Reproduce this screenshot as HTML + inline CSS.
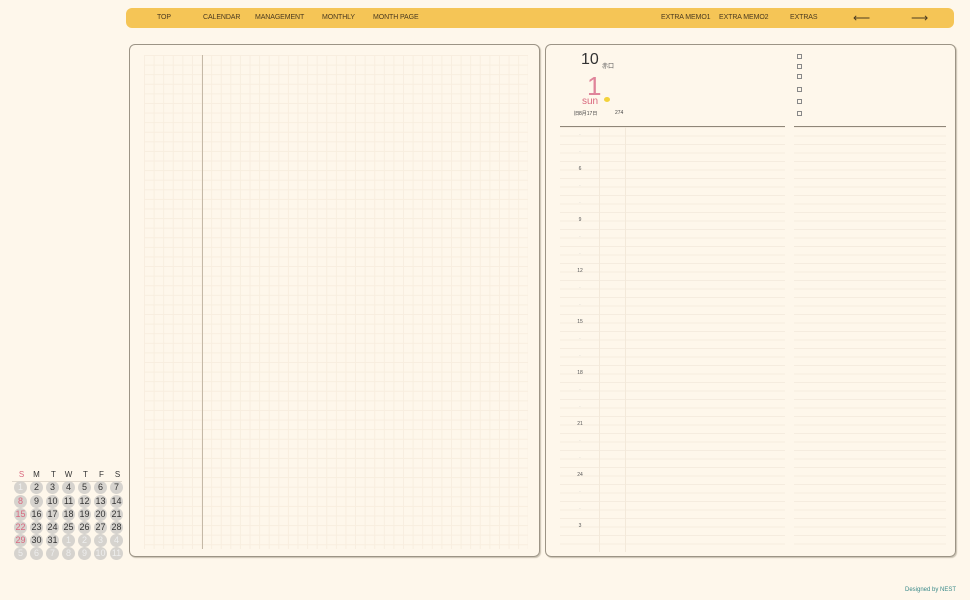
<!DOCTYPE html>
<html><head><meta charset="utf-8"><style>
*{margin:0;padding:0;box-sizing:border-box}
body{width:970px;height:600px;background:#fef7eb;font-family:"Liberation Sans","Noto Sans CJK JP",sans-serif;position:relative;overflow:hidden;color:#333}
.nav{position:absolute;left:126px;top:8px;width:828px;height:20px;background:#f5c556;border-radius:6px}
.nav span{position:absolute;top:6px;font-size:7px;color:#4a3a20;white-space:nowrap;letter-spacing:-0.1px}
.panel{position:absolute;top:44px;height:513px;border:1px solid #9c9486;border-radius:6px;box-shadow:1px 1px 1px #c8c0b0}
.grid{position:absolute;left:144px;top:55px;width:384px;height:494px;
background-image:linear-gradient(#f8eedf 1px,transparent 1px),linear-gradient(90deg,#f8eedf 1px,transparent 1px);background-size:9.6px 9.6px}
.t{position:absolute;white-space:nowrap}
.cb{position:absolute;left:797px;width:5px;height:5px;border:1px solid #888}
.hl{position:absolute;height:1px;background:#8f8678}
.rows{position:absolute;top:127px;height:425px;background-image:linear-gradient(#f5ecdf 1px,transparent 1px);background-size:100% 8.5px}
.hr{position:absolute;left:576px;font-size:5px;color:#555;width:8px;text-align:center}
.c{position:absolute;width:13px;height:13px;border-radius:50%;background:#d6d3ce;font-size:9px;text-align:center;line-height:13px;color:#333}
.h{position:absolute;font-size:8px;width:13px;text-align:center;top:470px;color:#333}
</style></head><body>
<div class="nav">
<span style="left:31px">TOP</span><span style="left:77px">CALENDAR</span><span style="left:129px">MANAGEMENT</span><span style="left:196px">MONTHLY</span><span style="left:247px">MONTH PAGE</span>
<span style="left:535px">EXTRA MEMO1</span><span style="left:593px">EXTRA MEMO2</span><span style="left:664px">EXTRAS</span>
<span style="left:727px;top:3px;font-size:12px">⟵</span><span style="left:785px;top:3px;font-size:12px">⟶</span>
</div>
<div class="panel" style="left:129px;width:411px"></div>
<div class="grid"></div>
<div style="position:absolute;left:202px;top:55px;width:1px;height:494px;background:#c4b8a6"></div>
<div class="panel" style="left:545px;width:411px"></div>
<div class="t" style="left:581px;top:51px;font-size:16px;color:#333">10</div>
<div class="t" style="left:602px;top:61px;font-size:6px;color:#555">赤口</div>
<div class="t" style="left:587px;top:71px;font-size:26px;color:#e0849a">1</div>
<div class="t" style="left:582px;top:96px;font-size:10px;color:#d9687e">sun</div>
<div style="position:absolute;left:604px;top:97px;width:6px;height:5px;background:#f3d23a;border-radius:50%"></div>
<div class="t" style="left:574px;top:110px;font-size:5px;color:#444">旧8月17日</div>
<div class="t" style="left:615px;top:110px;font-size:5px;color:#444">274</div>
<div class="cb" style="top:54px"></div><div class="cb" style="top:64px"></div><div class="cb" style="top:74px"></div><div class="cb" style="top:87px"></div><div class="cb" style="top:99px"></div><div class="cb" style="top:111px"></div>
<div class="hl" style="left:560px;top:126px;width:225px"></div>
<div class="hl" style="left:794px;top:126px;width:152px"></div>
<div class="rows" style="left:560px;width:225px"></div>
<div class="rows" style="left:794px;width:152px"></div>
<div style="position:absolute;left:599px;top:127px;width:1px;height:425px;background:#f3e9da"></div>
<div style="position:absolute;left:625px;top:127px;width:1px;height:425px;background:#f3e9da"></div>
<div class="hr" style="top:132px;color:#bbb">·</div><div class="hr" style="top:149px;color:#bbb">·</div><div class="hr" style="top:166px">6</div>
<div class="hr" style="top:183px;color:#bbb">·</div><div class="hr" style="top:200px;color:#bbb">·</div><div class="hr" style="top:217px">9</div>
<div class="hr" style="top:234px;color:#bbb">·</div><div class="hr" style="top:251px;color:#bbb">·</div><div class="hr" style="top:268px">12</div>
<div class="hr" style="top:285px;color:#bbb">·</div><div class="hr" style="top:302px;color:#bbb">·</div><div class="hr" style="top:319px">15</div>
<div class="hr" style="top:336px;color:#bbb">·</div><div class="hr" style="top:353px;color:#bbb">·</div><div class="hr" style="top:370px">18</div>
<div class="hr" style="top:387px;color:#bbb">·</div><div class="hr" style="top:404px;color:#bbb">·</div><div class="hr" style="top:421px">21</div>
<div class="hr" style="top:438px;color:#bbb">·</div><div class="hr" style="top:455px;color:#bbb">·</div><div class="hr" style="top:472px">24</div>
<div class="hr" style="top:489px;color:#bbb">·</div><div class="hr" style="top:506px;color:#bbb">·</div><div class="hr" style="top:523px">3</div>
<div class="h" style="left:15px;color:#d9687e">S</div><div class="h" style="left:30px">M</div><div class="h" style="left:47px">T</div><div class="h" style="left:62px">W</div><div class="h" style="left:79px">T</div><div class="h" style="left:95px">F</div><div class="h" style="left:111px">S</div>
<div style="position:absolute;left:12px;top:481px;width:110px;height:1px;background:#e0d8cc"></div>
<div id="cal"></div>
<div class="t" style="left:905px;top:587px;font-size:6px;color:#3a8a8a">Designed by NEST</div>
<script>
var xs=[14,30,46,62,78,94,110],ys=[481,495,508,521,534,547];
var d=[[1,2,3,4,5,6,7],[8,9,10,11,12,13,14],[15,16,17,18,19,20,21],[22,23,24,25,26,27,28],[29,30,31,1,2,3,4],[5,6,7,8,9,10,11]];
var h='';
for(var r=0;r<6;r++)for(var c=0;c<7;c++){var n=d[r][c];var faint=(r==0&&c==0)||(r==4&&c>2)||r==5;var col=faint?'#eee':(c==0?'#d9687e':'#333');
h+='<div class="c" style="left:'+xs[c]+'px;top:'+ys[r]+'px;color:'+col+'">'+n+'</div>';}
document.getElementById('cal').innerHTML=h;
</script>
</body></html>
